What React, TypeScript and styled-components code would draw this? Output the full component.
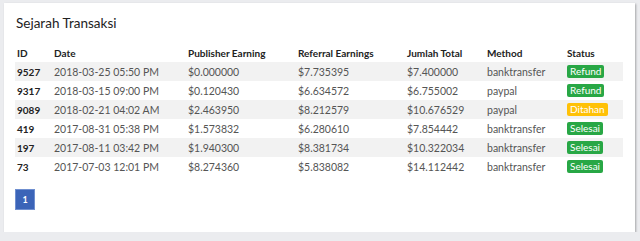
import React from "react";
import styled, { createGlobalStyle } from "styled-components";

type Status = "Refund" | "Ditahan" | "Selesai";

interface Transaksi {
	id: number;
	date: string;
	publisher: string;
	referral: string;
	total: string;
	method: string;
	status: Status;
}

const rows: Transaksi[] = [
	{ id: 9527, date: "2018-03-25 05:50 PM", publisher: "$0.000000", referral: "$7.735395", total: "$7.400000", method: "banktransfer", status: "Refund" },
	{ id: 9317, date: "2018-03-15 09:00 PM", publisher: "$0.120430", referral: "$6.634572", total: "$6.755002", method: "paypal", status: "Refund" },
	{ id: 9089, date: "2018-02-21 04:02 AM", publisher: "$2.463950", referral: "$8.212579", total: "$10.676529", method: "paypal", status: "Ditahan" },
	{ id: 419, date: "2017-08-31 05:38 PM", publisher: "$1.573832", referral: "$6.280610", total: "$7.854442", method: "banktransfer", status: "Selesai" },
	{ id: 197, date: "2017-08-11 03:42 PM", publisher: "$1.940300", referral: "$8.381734", total: "$10.322034", method: "banktransfer", status: "Selesai" },
	{ id: 73, date: "2017-07-03 12:01 PM", publisher: "$8.274360", referral: "$5.838082", total: "$14.112442", method: "banktransfer", status: "Selesai" },
];

const columns = [
	{ label: "ID", width: 37 },
	{ label: "Date", width: 134 },
	{ label: "Publisher Earning", width: 110 },
	{ label: "Referral Earnings", width: 109 },
	{ label: "Jumlah Total", width: 80 },
	{ label: "Method", width: 80 },
	{ label: "Status", width: 58 },
];

function App() {
	return (
		<>
			<GlobalStyle />
			<Card>
				<Title>Sejarah Transaksi</Title>
				<Table>
					<colgroup>
						{columns.map((c) => (
							<col key={c.label} style={{ width: c.width }} />
						))}
					</colgroup>
					<thead>
						<tr>
							{columns.map((c) => (
								<th key={c.label}>{c.label}</th>
							))}
						</tr>
					</thead>
					<tbody>
						{rows.map((r) => (
							<tr key={r.id}>
								<td className="id">{r.id}</td>
								<td>{r.date}</td>
								<td>{r.publisher}</td>
								<td>{r.referral}</td>
								<td>{r.total}</td>
								<td>{r.method}</td>
								<td>
									<Badge $status={r.status}>{r.status}</Badge>
								</td>
							</tr>
						))}
					</tbody>
				</Table>
				<Pagination>
					<PageButton $active>1</PageButton>
				</Pagination>
			</Card>
		</>
	);
}

export default App;

const GlobalStyle = createGlobalStyle`
	html, body {
		margin: 0;
		padding: 0;
		background: #ebecef;
		font-family: "Lato", "Noto Sans", sans-serif;
	}
`;

const Card = styled.div`
	margin: 3px 5px 0 4px;
	padding: 12px 12px 22px 11px;
	background: #fff;
	box-shadow: 1px 1px 2px rgba(0, 0, 0, 0.3);
`;

const Title = styled.h2`
	margin: 0 0 12px 1px;
	font-size: 13.5px;
	line-height: 16px;
	font-weight: 400;
	color: #222;
`;

const Table = styled.table`
	width: 608px;
	border-collapse: collapse;
	table-layout: fixed;
	font-size: 10.5px;

	th,
	td {
		height: 19px;
		padding: 0 2px;
		text-align: left;
		white-space: nowrap;
		vertical-align: middle;
	}

	th {
		font-weight: 700;
		font-size: 10px;
		color: #222;
	}

	td {
		color: #555;
	}

	td.id {
		font-weight: 700;
		font-size: 10px;
		color: #222;
	}

	tbody tr:nth-child(odd) {
		background: #f2f2f2;
	}
`;

const badgeColors: Record<Status, string> = {
	Refund: "#28a745",
	Ditahan: "#ffc107",
	Selesai: "#28a745",
};

const Badge = styled.span<{ $status: Status }>`
	display: inline-block;
	padding: 1px 3px;
	border-radius: 2px;
	background: ${(p) => badgeColors[p.$status]};
	color: #fff;
	font-size: 10px;
	line-height: 11px;
`;

const Pagination = styled.div`
	display: flex;
	gap: 4px;
	margin-top: 13px;
`;

const PageButton = styled.button<{ $active?: boolean }>`
	width: 20px;
	height: 21px;
	padding: 0;
	border: 1px solid ${(p) => (p.$active ? "#6f8fd0" : "#ddd")};
	background: ${(p) => (p.$active ? "#3b64b8" : "#fff")};
	color: ${(p) => (p.$active ? "#fff" : "#3b64b8")};
	font-family: inherit;
	font-size: 9px;
	font-weight: 700;
`;
